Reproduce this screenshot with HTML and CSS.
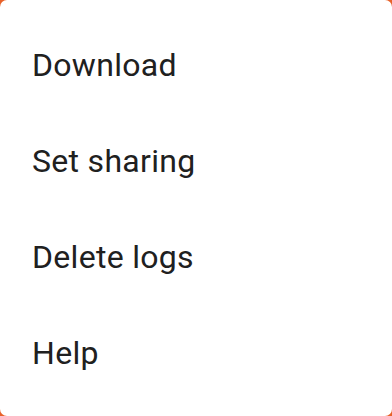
FILE: index.html
```html
<!DOCTYPE html>
<html>
<head>
<meta charset="utf-8">
<link rel="stylesheet" href="styles.css">
</head>
<body>
<div class="menu">
  <div class="item">Download</div>
  <div class="item">Set sharing</div>
  <div class="item">Delete logs</div>
  <div class="item">Help</div>
</div>
</body>
</html>
```
FILE: styles.css
```css
html, body {
  margin: 0;
  padding: 0;
  width: 392px;
  height: 416px;
  background: #e8622a;
  overflow: hidden;
}
.menu {
  width: 392px;
  height: 416px;
  box-sizing: border-box;
  background: #ffffff;
  border-radius: 7px;
  padding: 17px 0 15px;
  display: flex;
  flex-direction: column;
}
.item {
  height: 96px;
  display: flex;
  align-items: center;
  padding-left: 32px;
  font-family: Roboto, "Noto Sans", sans-serif;
  font-size: 32px;
  letter-spacing: 0.3px;
  color: #202020;
}
```
